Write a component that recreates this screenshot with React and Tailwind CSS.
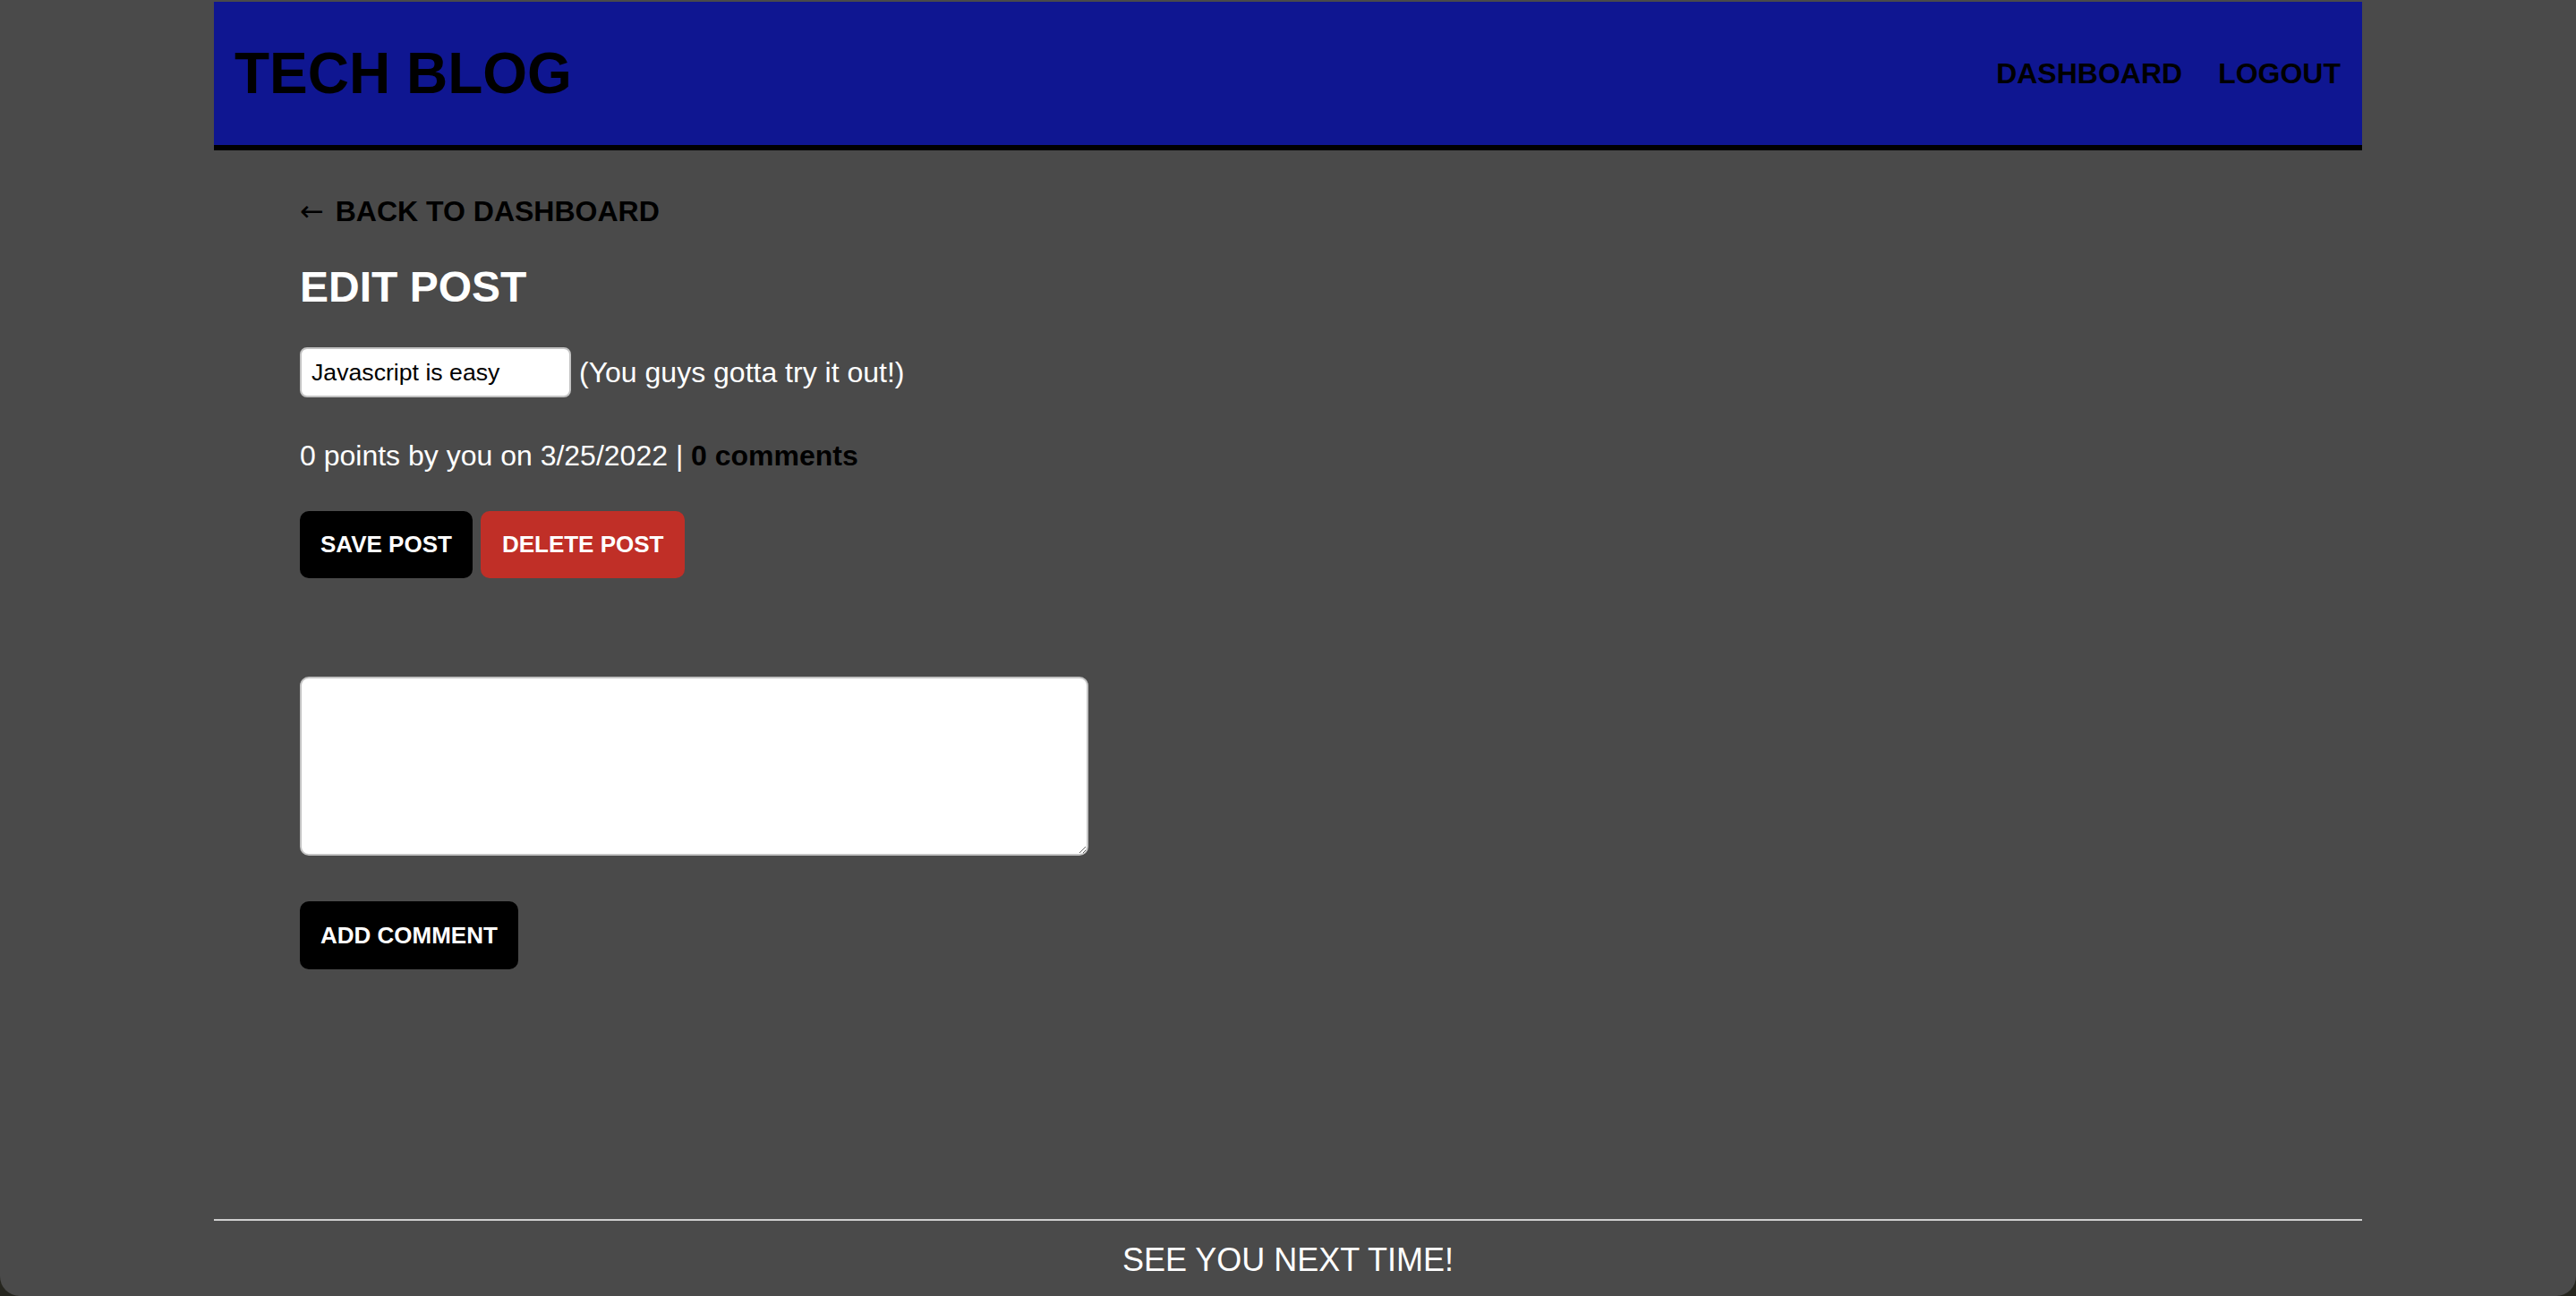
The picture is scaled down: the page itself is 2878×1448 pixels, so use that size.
import React, { useState } from "react";

const font = { fontFamily: '"Liberation Sans", Arial, Helvetica, sans-serif' };

const App = () => {
  const [title, setTitle] = useState("Javascript is easy");
  const [comment, setComment] = useState("");

  return (
    <div className="bg-[#26261f]" style={font}>
      <div className="min-h-screen bg-[#4a4a4a] rounded-b-[22px] flex flex-col">
        <header className="mt-[2px] mx-auto w-[2400px] h-[166px] bg-[#0f1691] border-b-[6px] border-black flex items-center justify-between pl-[23px] pr-6">
          <h1 className="text-[64px] leading-[64px] font-bold text-black">TECH BLOG</h1>
          <nav className="flex items-center gap-10 text-[32px] leading-[32px] font-bold text-black">
            <a href="#">DASHBOARD</a>
            <a href="#">LOGOUT</a>
          </nav>
        </header>

        <main className="flex-1 mx-auto w-[2400px] pl-24">
          <a href="#" className="block mt-[52px] text-[32px] leading-[32px] font-bold text-black">
            <span className="font-normal mr-[4px]" style={{ fontFamily: '"DejaVu Sans", sans-serif' }}>←</span>{" "}
            BACK TO DASHBOARD
          </a>

          <h2 className="mt-[45px] text-[48px] leading-[48px] font-bold text-white">EDIT POST</h2>

          <div className="mt-[43px] flex items-center">
            <input
              type="text"
              value={title}
              onChange={(e) => setTitle(e.target.value)}
              className="w-[303px] h-[56px] bg-white border-2 border-[#c3c3c3] rounded-[8px] pl-[11px] text-[26.67px] text-black outline-none"
              style={font}
            />
            <span className="ml-[9px] text-[32px] leading-[32px] text-white">(You guys gotta try it out!)</span>
          </div>

          <p className="mt-[49px] text-[32px] leading-[32px] text-white">
            0 points by you on 3/25/2022 | <a href="#" className="font-bold text-black">0 comments</a>
          </p>

          <div className="mt-[46px] flex gap-[9px]">
            <button className="h-[75px] px-[23px] rounded-[10px] bg-black text-white text-[26px] font-bold" style={font}>
              SAVE POST
            </button>
            <button className="h-[75px] px-[24px] rounded-[10px] bg-[#c02f27] text-white text-[26px] font-bold" style={font}>
              DELETE POST
            </button>
          </div>

          <textarea
            value={comment}
            onChange={(e) => setComment(e.target.value)}
            className="block mt-[110px] w-[881px] h-[200px] bg-white border-2 border-[#c3c3c3] rounded-[10px] outline-none"
          />

          <button className="mt-[51px] h-[76px] px-[23px] rounded-[10px] bg-black text-white text-[26px] font-bold" style={font}>
            ADD COMMENT
          </button>
        </main>

        <footer className="mx-auto w-[2400px] border-t-2 border-[#cfcfcf] pt-[26px] pb-[22px] text-center text-[36px] leading-[36px] text-white">
          SEE YOU NEXT TIME!
        </footer>
      </div>
    </div>
  );
};

export default App;
